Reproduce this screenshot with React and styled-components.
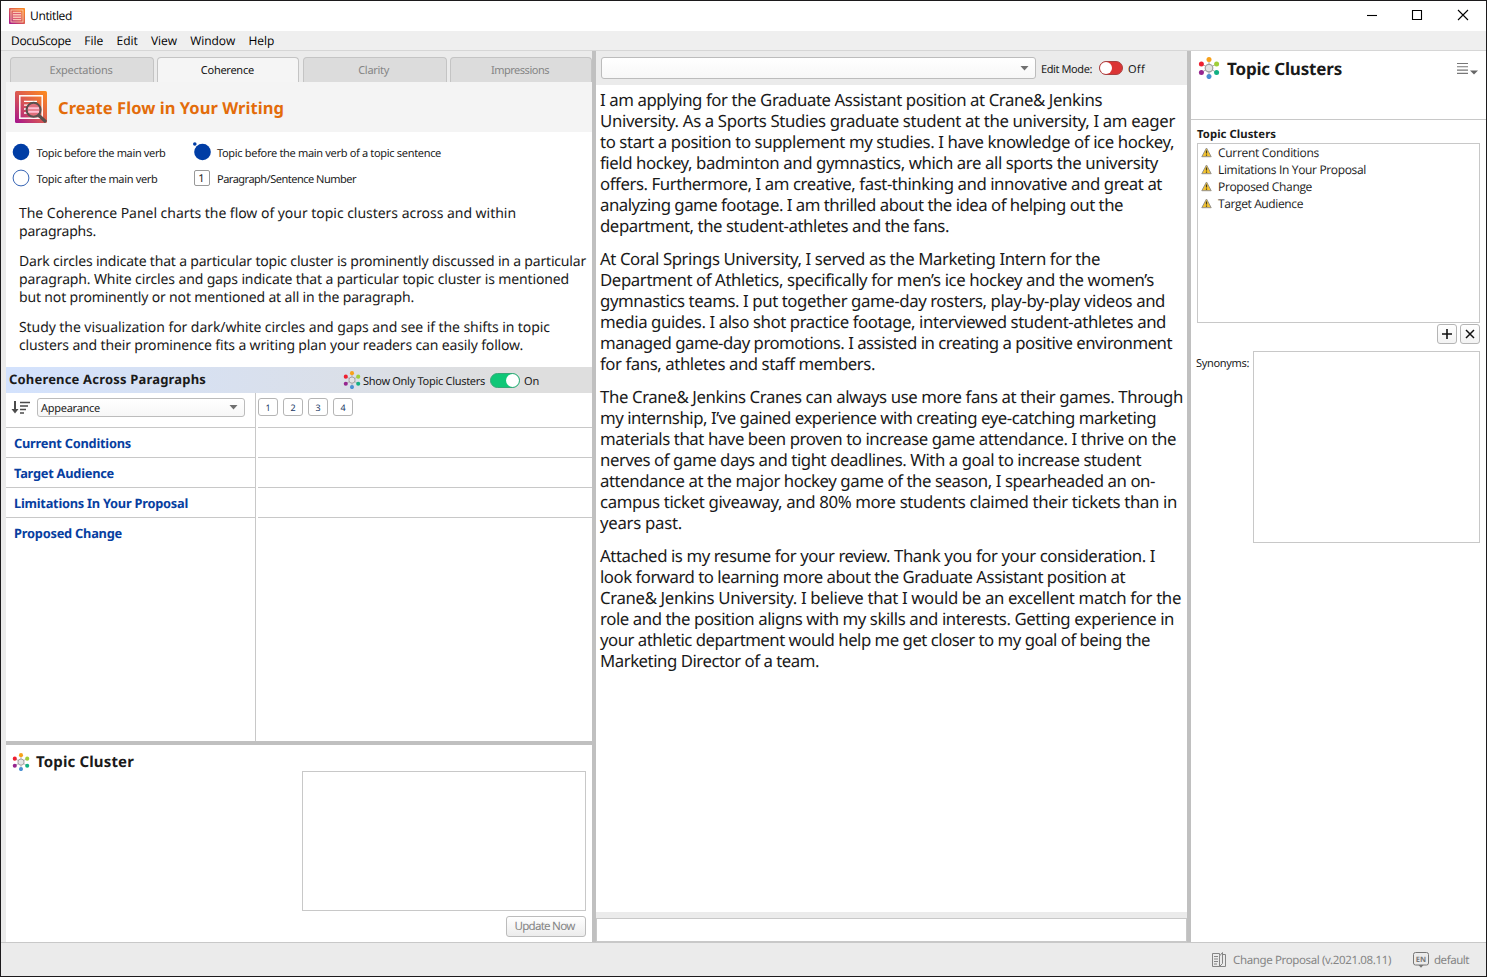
import React, { useLayoutEffect, useRef, useState } from "react";
import styled, { createGlobalStyle } from "styled-components";

const Global = createGlobalStyle`
  * { box-sizing: border-box; }
  html, body { margin: 0; padding: 0; overflow: hidden; }
  body { font-family: "Noto Sans", sans-serif; font-size: 11px; color: #1a1a1a; text-rendering: geometricPrecision; }
  svg { display: block; flex: none; }
`;

const ui = `"Open Sans", sans-serif`;
const line = "#c8c8c8";

const TextRun = styled.span`
  display: inline-block;
  white-space: pre;
  flex: none;
`;

/* Spreads the tracking of one run of text so that it takes up `w` pixels. */
function Fit({ w, children }) {
  const ref = useRef(null);
  const [spacing, setSpacing] = useState(0);
  useLayoutEffect(() => {
    const natural = ref.current.getBoundingClientRect().width;
    setSpacing((w - natural) / children.length);
  }, [w, children]);
  return <TextRun ref={ref} style={{ letterSpacing: spacing }}>{children}</TextRun>;
}

const Frame = styled.div`
  width: 1487px; height: 977px; border: 1px solid #1c1a1c; background: #ebebeb;
  display: flex; flex-direction: column;
`;
const TitleBar = styled.header`
  height: 30px; background: #fff; display: flex; align-items: center; padding: 0 0 1px 8px; flex: none;
  font: 12px/16px ${ui}; color: #000;
`;
const TitleText = styled.div`margin: 1px 0 0 5px; flex: 1;`;
const WindowButtons = styled.div`display: flex; width: 136px; height: 29px;`;
const MenuBar = styled.nav`
  height: 20px; flex: none; background: #efefef; border-bottom: 1px solid #d6d6d6;
  display: flex; align-items: center; padding-left: 10px; gap: 13.3px; font: 12px/18px ${ui}; color: #000;
`;
const Workspace = styled.main`height: 891px; flex: none; display: flex; padding-left: 5px;`;
const VSplit = styled.div`width: 4px; background: #c0c0c0; flex: none;`;
const HSplit = styled.div`height: 4px; background: #c0c0c0; flex: none;`;

const LeftColumn = styled.section`width: 586px; display: flex; flex-direction: column; background: #fff;`;
const Tabs = styled.div`height: 31px; background: #ebebeb; padding: 6px 0 0 4px; display: flex; justify-content: space-between; flex: none;`;
const Tab = styled.div`
  width: ${(p) => p.$w}px; height: 25px; border: 1px solid #c4c4c4; border-bottom: 0; border-radius: 4px 4px 0 0;
  background: ${(p) => (p.$active ? "#f5f5f5" : "#dcdcdc")}; color: ${(p) => (p.$active ? "#111" : "#858585")};
  display: flex; justify-content: center; line-height: 25px; padding-right: 2px;
`;
const Banner = styled.div`height: 50px; flex: none; background: #f4f4f4; display: flex; align-items: center; padding-left: 9px; gap: 11px;`;
const BannerTitle = styled.h1`margin: 1px 0 0; font-size: 16.5px; line-height: 24px; color: #e36c0a;`;
const Legend = styled.div`
  height: 64px; flex: none; display: grid; grid-template-columns: 180.5px 1fr; grid-template-rows: 26px 26px; padding: 7px 0 0 6px;
`;
const LegendItem = styled.div`display: flex; align-items: center; line-height: 24px;`;
const LegendIcon = styled.div`width: 24.5px; flex: none;`;
const LegendText = styled.div`display: flex; padding-top: 3px;`;
const NumberKey = styled.div`
  width: 16px; height: 16px; margin-left: 1px; border: 1px solid #999; border-radius: 2px; font-size: 11px; line-height: 15px; text-align: center;
`;
const Intro = styled.div`height: 171px; flex: none; padding: 9px 0 0 13px; font-size: 14px; line-height: 18px;`;
const IntroPara = styled.div`display: flex; flex-direction: column; align-items: flex-start; margin-bottom: 12px;`;

const SectionBar = styled.div`
  height: 26px; flex: none; display: flex; align-items: center; padding-left: 3px; line-height: 26px;
  background: linear-gradient(90deg, #d3e2fd, #dedede 86%);
`;
const SectionTitle = styled.div`width: 334px; font-size: 13px; font-weight: 700; line-height: 25px; padding-bottom: 1px;`;
const ToggleLabel = styled.div`margin-left: 2px; padding-top: 3px; width: 127px; display: flex;`;
const StateLabel = styled.div`margin-left: 4px; padding-top: 3px; display: flex;`;
const Switch = styled.div`
  width: ${(p) => p.$w}px; height: ${(p) => p.$h}px; border-radius: 9px; display: flex; flex: none;
  justify-content: ${(p) => (p.$on ? "flex-end" : "flex-start")};
  background: ${(p) => (p.$on ? "#0fc777" : "#db3434")}; border: 1px solid ${(p) => (p.$on ? "#35a878" : "#a84040")};
`;
const Knob = styled.div`height: 100%; aspect-ratio: 1; border-radius: 50%; background: #fff;`;

const Matrix = styled.div`height: 348px; flex: none; display: flex;`;
const TopicCol = styled.div`width: 250px; border-right: 1px solid ${line};`;
const GridCol = styled.div`flex: 1; margin-left: 2px;`;
const MatrixHead = styled.div`height: 35px; border-bottom: 1px solid ${line}; display: flex; padding: 5px 0 0 ${(p) => p.$pad || 0}px;`;
const MatrixRow = styled.div`
  height: 30px; padding-left: 8px; font-size: 12.8px; font-weight: 700; line-height: 31px; color: #073ea0;
  border-bottom: ${(p) => (p.$last ? "0" : `1px solid ${line}`)};
`;
const Select = styled.div`
  width: ${(p) => p.$w}px; height: ${(p) => p.$h}px; border: 1px solid #bcbcbc; border-radius: 3px;
  background: linear-gradient(#fff, #f7f7f7); display: flex; align-items: center; justify-content: space-between;
  padding: 0 6px 0 3px; line-height: 18px; flex: none;
`;
const SelectText = styled.div`display: flex; padding-top: 2px;`;
const SortIcon = styled.div`width: 26px; padding-top: 3px;`;
const ParaButton = styled.div`
  width: 20px; height: 18px; margin-right: 5px; border: 1px solid #b5b5b5; border-radius: 3px; font-size: 9px; line-height: 17px; text-align: center; color: #223a66;
`;

const ClusterPane = styled.div`height: 197px; flex: none; padding: 7px 6px 0 6px; display: flex; flex-direction: column; align-items: flex-end;`;
const ClusterHead = styled.div`height: 19px; width: 100%; display: flex; align-items: center; gap: 6px; font-size: 15px; font-weight: 700; line-height: 24px;`;
const Field = styled.div`width: ${(p) => p.$w}px; height: ${(p) => p.$h}px; border: 1px solid ${line}; background: #fff; flex: none;`;
const UpdateButton = styled.div`
  width: 80px; height: 21px; margin-top: 5px; border: 1px solid #bcbcbc; border-radius: 3px; background: linear-gradient(#fff, #ececec);
  color: #858585; font-size: 11.6px; line-height: 20px; display: flex; justify-content: center; padding-right: 3px;
`;

const Editor = styled.section`width: 591px; display: flex; flex-direction: column; background: #fff;`;
const EditorBar = styled.div`height: 34px; flex: none; background: #ebebeb; display: flex; align-items: flex-start; padding: 6px 0 0 5px;`;
const EditLabel = styled.div`margin-left: 5px; width: 58px; line-height: 25px;`;
const SwitchSlot = styled.div`padding-top: 4px;`;
const OffLabel = styled.div`margin-left: 5px; line-height: 25px;`;
const Doc = styled.article`height: 827px; flex: none; padding: 4px 0 0 4px; font-size: 16.8px; line-height: 21px;`;
const DocPara = styled.div`display: flex; flex-direction: column; align-items: flex-start; margin-bottom: 12px;`;
const Gap = styled.div`height: 6px; flex: none; background: #ebebeb;`;

const RightColumn = styled.aside`width: 295px; background: #fff; display: flex; flex-direction: column;`;
const RightHead = styled.div`height: 69px; flex: none; border-bottom: 1px solid ${line}; display: flex; align-items: flex-start; padding: 6px 8px 0 7px;`;
const RightTitle = styled.h2`margin: 0 0 0 7px; flex: 1; font-size: 17px; line-height: 24px;`;
const MenuSlot = styled.div`padding-top: 5px;`;
const RightBody = styled.div`padding: 5px 6px 0 6px; display: flex; flex-direction: column;`;
const ListTitle = styled.div`height: 18px; font-size: 11.3px; font-weight: 700; line-height: 20px;`;
const List = styled.div`height: 180px; border: 1px solid ${line}; font: 12px/17px ${ui};`;
const ListItem = styled.div`height: 17px; display: flex; align-items: center; gap: 6px; padding-left: 3px;`;
const ListActions = styled.div`height: 28px; display: flex; justify-content: flex-end; gap: 3px; padding-top: 1px;`;
const SquareButton = styled.div`
  width: 20px; height: 20px; border: 1px solid #b5b5b5; border-radius: 3px; background: linear-gradient(#fff, #f3f3f3); display: flex; align-items: center; justify-content: center;
`;
const SynRow = styled.div`display: flex; justify-content: space-between; line-height: 25px; margin-left: -1px;`;

const StatusBar = styled.footer`
  flex: 1; border-top: 1px solid ${line}; display: flex; align-items: center; padding-left: 1211px; color: #858585; line-height: 32px;
`;
const StatusText = styled.div`font-size: 11.5px; margin: 2px 22px 0 7px;`;
const DefaultText = styled.div`font-size: 11.5px; margin: 2px 0 0 5px;`;

const dots = [
  ["#f7a11b", 11, 2.6], ["#a0ce3a", 18.6, 6.9], ["#12b083", 18.6, 15.5],
  ["#4a90d2", 11, 19.6], ["#96268f", 3.4, 15.5], ["#ee2030", 3.4, 6.9],
];
const Cluster = ({ size }) => (
  <svg width={size} height={size} viewBox="0 0 22 22">
    {dots.map(([c, x, y]) => (
      <g key={c}>
        <line x1="11" y1="11" x2={x} y2={y} stroke="#aaa" strokeWidth="1" />
        <circle cx={x} cy={y} r="2.5" fill={c} />
      </g>
    ))}
    <circle cx="11" cy="11.1" r="3.8" fill="#e4e4e4" stroke="#a0a0a0" strokeWidth="1.2" />
  </svg>
);

const AppIcon = ({ size, lens }) => (
  <svg width={size} height={size} viewBox="0 0 32 32">
    <defs>
      <linearGradient id={`g${size}`} x1="0" y1="1" x2="1" y2="0">
        <stop offset="0" stopColor="#a3128f" />
        <stop offset="0.5" stopColor="#dc5a50" />
        <stop offset="1" stopColor="#ff8d1c" />
      </linearGradient>
    </defs>
    <rect width="32" height="32" rx="1.5" fill={`url(#g${size})`} />
    {lens ? (
      <g>
        <rect x="4.8" y="4.8" width="22.4" height="22.4" fill="none" stroke="#fff" strokeWidth="1.5" />
        <path d="M9 10.4h13M9 14.2h4.5M9 18h3M9 22h5" stroke="#fff" strokeWidth="1.3" />
        <path d="M23.4 24L31 31" stroke="#59514e" strokeWidth="3.2" />
        <circle cx="18.6" cy="18.8" r="7" fill="#e0707c" stroke="#59514e" strokeWidth="2" />
        <path d="M13.2 17.2h10.8M13.2 20.8h10.8" stroke="#ffc0d4" strokeWidth="2" />
      </g>
    ) : (
      <g>
        <rect x="4" y="4" width="24" height="24" fill="none" stroke="#ffd9b8" strokeWidth="1.6" />
        <rect x="7.5" y="7.5" width="17" height="17" fill="#fbc5b4" />
        <path d="M8 11h16M8 16h16M8 21h16" stroke="#d8506a" strokeWidth="1.8" />
      </g>
    )}
  </svg>
);

const Arrow = () => <svg width="9" height="5" viewBox="0 0 9 5"><path d="M0.5 0h8L4.5 4.6z" fill="#707070" /></svg>;

const Dot = ({ open, lead }) => (
  <svg width="21" height="20" viewBox="0 0 21 20">
    {lead && <circle cx="1.8" cy="2" r="1.8" fill="#003da5" />}
    <circle cx={lead ? 9.5 : 9} cy="10" r={open ? 7.9 : 8.3} fill={open ? "#fff" : "#003da5"} stroke={open ? "#3765b5" : "none"} />
  </svg>
);

const Warning = () => (
  <svg width="11" height="11" viewBox="0 0 11 11">
    <path d="M5.5 1L10.2 9.7H.8z" fill="#f4c430" stroke="#94918a" strokeLinejoin="round" />
    <path d="M5.5 3.6v3M5.5 7.5v1.2" stroke="#403818" strokeWidth="1.2" />
  </svg>
);

const intro = [
  [["The Coherence Panel charts the flow of your topic clusters across and within", 497], ["paragraphs.", 77]],
  [["Dark circles indicate that a particular topic cluster is prominently discussed in a particular", 567],
    ["paragraph. White circles and gaps indicate that a particular topic cluster is mentioned", 550],
    ["but not prominently or not mentioned at all in the paragraph.", 395]],
  [["Study the visualization for dark/white circles and gaps and see if the shifts in topic", 531],
    ["clusters and their prominence fits a writing plan your readers can easily follow.", 504]],
];

const letter = [
  [["I am applying for the Graduate Assistant position at Crane& Jenkins", 502],
    ["University. As a Sports Studies graduate student at the university, I am eager", 575],
    ["to start a position to supplement my studies. I have knowledge of ice hockey,", 574],
    ["field hockey, badminton and gymnastics, which are all sports the university", 558],
    ["offers. Furthermore, I am creative, fast-thinking and innovative and great at", 562],
    ["analyzing game footage. I am thrilled about the idea of helping out the", 523],
    ["department, the student-athletes and the fans.", 349]],
  [["At Coral Springs University, I served as the Marketing Intern for the", 500],
    ["Department of Athletics, specifically for men’s ice hockey and the women’s", 554],
    ["gymnastics teams. I put together game-day rosters, play-by-play videos and", 565],
    ["media guides. I also shot practice footage, interviewed student-athletes and", 566],
    ["managed game-day promotions. I assisted in creating a positive environment", 572],
    ["for fans, athletes and staff members.", 275]],
  [["The Crane& Jenkins Cranes can always use more fans at their games. Through", 583],
    ["my internship, I’ve gained experience with creating eye-catching marketing", 556],
    ["materials that have been proven to increase game attendance. I thrive on the", 576],
    ["nerves of game days and tight deadlines. With a goal to increase student", 541],
    ["attendance at the major hockey game of the season, I spearheaded an on-", 555],
    ["campus ticket giveaway, and 80% more students claimed their tickets than in", 577],
    ["years past.", 82]],
  [["Attached is my resume for your review. Thank you for your consideration. I", 555],
    ["look forward to learning more about the Graduate Assistant position at", 525],
    ["Crane& Jenkins University. I believe that I would be an excellent match for the", 581],
    ["role and the position aligns with my skills and interests. Getting experience in", 574],
    ["your athletic department would help me get closer to my goal of being the", 550],
    ["Marketing Director of a team.", 219]],
];

const menus = [["DocuScope", 60], ["File", 19], ["Edit", 21], ["View", 26], ["Window", 45], ["Help", 26]];
const tabs = [["Expectations", 63, 144], ["Coherence", 53, 142], ["Clarity", 31, 144], ["Impressions", 58, 142]];
const topics = [["Current Conditions", 117], ["Target Audience", 100], ["Limitations In Your Proposal", 174], ["Proposed Change", 108]];
const clusters = [["Current Conditions", 101], ["Limitations In Your Proposal", 148], ["Proposed Change", 94], ["Target Audience", 85]];

export default function App() {
  return (
    <Frame>
      <Global />
      <TitleBar>
        <AppIcon size={16} />
        <TitleText><Fit w={42}>Untitled</Fit></TitleText>
        <WindowButtons>
          <svg width="136" height="28" viewBox="0 0 136 28" fill="none" stroke="#000" strokeWidth="1.1">
            <path d="M17 14.5h10" /><path d="M62.5 9.5h9v9h-9z" /><path d="M108 9l10 10M118 9l-10 10" />
          </svg>
        </WindowButtons>
      </TitleBar>
      <MenuBar>{menus.map(([t, w]) => <Fit key={t} w={w}>{t}</Fit>)}</MenuBar>

      <Workspace>
        <LeftColumn>
          <Tabs>
            {tabs.map(([t, w, box]) => <Tab key={t} $w={box} $active={t === "Coherence"}><Fit w={w}>{t}</Fit></Tab>)}
          </Tabs>
          <Banner>
            <AppIcon size={32} lens />
            <BannerTitle><Fit w={226}>Create Flow in Your Writing</Fit></BannerTitle>
          </Banner>
          <Legend>
            <LegendItem><LegendIcon><Dot /></LegendIcon><LegendText><Fit w={129}>Topic before the main verb</Fit></LegendText></LegendItem>
            <LegendItem><LegendIcon><Dot lead /></LegendIcon><LegendText><Fit w={224}>Topic before the main verb of a topic sentence</Fit></LegendText></LegendItem>
            <LegendItem><LegendIcon><Dot open /></LegendIcon><LegendText><Fit w={121}>Topic after the main verb</Fit></LegendText></LegendItem>
            <LegendItem><LegendIcon><NumberKey>1</NumberKey></LegendIcon><LegendText><Fit w={139}>Paragraph/Sentence Number</Fit></LegendText></LegendItem>
          </Legend>
          <Intro>
            {intro.map((p, i) => <IntroPara key={i}>{p.map(([t, w]) => <Fit key={t} w={w}>{t}</Fit>)}</IntroPara>)}
          </Intro>
          <SectionBar>
            <SectionTitle><Fit w={197}>Coherence Across Paragraphs</Fit></SectionTitle>
            <Cluster size={18} />
            <ToggleLabel><Fit w={122}>Show Only Topic Clusters</Fit></ToggleLabel>
            <Switch $on $w={30} $h={15}><Knob /></Switch>
            <StateLabel><Fit w={15}>On</Fit></StateLabel>
          </SectionBar>
          <Matrix>
            <TopicCol>
              <MatrixHead $pad={5}>
                <SortIcon>
                  <svg width="20" height="13" viewBox="0 0 20 13" fill="none" stroke="#4b4b4b">
                    <path d="M4 0v10" strokeWidth="2" /><path d="M.5 8h7L4 12.6z" fill="#4b4b4b" stroke="none" />
                    <path d="M9 1.5h10M9 5h8M9 8.5h6M9 12h4" strokeWidth="1.4" />
                  </svg>
                </SortIcon>
                <Select $w={208} $h={19}><SelectText><Fit w={59}>Appearance</Fit></SelectText><Arrow /></Select>
              </MatrixHead>
              {topics.map(([t, w], i) => <MatrixRow key={t} $last={i === 3}><Fit w={w}>{t}</Fit></MatrixRow>)}
            </TopicCol>
            <GridCol>
              <MatrixHead>{[1, 2, 3, 4].map((n) => <ParaButton key={n}>{n}</ParaButton>)}</MatrixHead>
              <MatrixRow /><MatrixRow /><MatrixRow />
            </GridCol>
          </Matrix>
          <HSplit />
          <ClusterPane>
            <ClusterHead><Cluster size={18} /><Fit w={98}>Topic Cluster</Fit></ClusterHead>
            <Field $w={284} $h={140} />
            <UpdateButton><Fit w={60}>Update Now</Fit></UpdateButton>
          </ClusterPane>
        </LeftColumn>
        <VSplit />
        <Editor>
          <EditorBar>
            <Select $w={435} $h={22}><span /><Arrow /></Select>
            <EditLabel><Fit w={51}>Edit Mode:</Fit></EditLabel>
            <SwitchSlot><Switch $w={24} $h={14}><Knob /></Switch></SwitchSlot>
            <OffLabel><Fit w={17}>Off</Fit></OffLabel>
          </EditorBar>
          <Doc>
            {letter.map((p, i) => <DocPara key={i}>{p.map(([t, w]) => <Fit key={t} w={w}>{t}</Fit>)}</DocPara>)}
          </Doc>
          <Gap />
          <Field $w={591} $h={24} />
        </Editor>
        <VSplit />
        <RightColumn>
          <RightHead>
            <Cluster size={22} />
            <RightTitle><Fit w={115}>Topic Clusters</Fit></RightTitle>
            <MenuSlot>
              <svg width="22" height="13" viewBox="0 0 22 13">
                <path d="M1 1.5h11M1 4.8h11M1 8.1h11M1 11.4h11" stroke="#777" strokeWidth="1.1" />
                <path d="M14 8.5h8l-4 4z" fill="#666" />
              </svg>
            </MenuSlot>
          </RightHead>
          <RightBody>
            <ListTitle><Fit w={79}>Topic Clusters</Fit></ListTitle>
            <List>{clusters.map(([t, w]) => <ListItem key={t}><Warning /><Fit w={w}>{t}</Fit></ListItem>)}</List>
            <ListActions>
              <SquareButton><svg width="12" height="12" viewBox="0 0 12 12"><path d="M1 6h10M6 1v10" stroke="#111" strokeWidth="1.6" /></svg></SquareButton>
              <SquareButton><svg width="10" height="10" viewBox="0 0 10 10"><path d="M1 1l8 8M9 1L1 9" stroke="#111" strokeWidth="1.5" /></svg></SquareButton>
            </ListActions>
            <SynRow><Fit w={53}>Synonyms:</Fit><Field $w={227} $h={192} /></SynRow>
          </RightBody>
        </RightColumn>
      </Workspace>

      <StatusBar>
        <svg width="14" height="16" viewBox="0 0 14 16" fill="none" stroke="#858585" strokeWidth="1">
          <path d="M7.5 3.5V1.5h-7v13h7M7.5 14.5V4l3-3.5v11l-3 3M11 2.5h2.5v12h-6M2 4.5h4M2 7h4M2 9.5h4M2 12h3" />
        </svg>
        <StatusText><Fit w={158}>Change Proposal (v.2021.08.11)</Fit></StatusText>
        <svg width="16" height="16" viewBox="0 0 16 16">
          <rect x=".5" y=".5" width="15" height="12.5" rx="2" fill="none" stroke="#777" />
          <path d="M5.5 13h5L8 15.8z" fill="#777" />
          <text x="8" y="9.8" textAnchor="middle" fontSize="7.5" fontWeight="700" fontFamily="Noto Sans" fill="#777">EN</text>
        </svg>
        <DefaultText><Fit w={35}>default</Fit></DefaultText>
      </StatusBar>
    </Frame>
  );
}
